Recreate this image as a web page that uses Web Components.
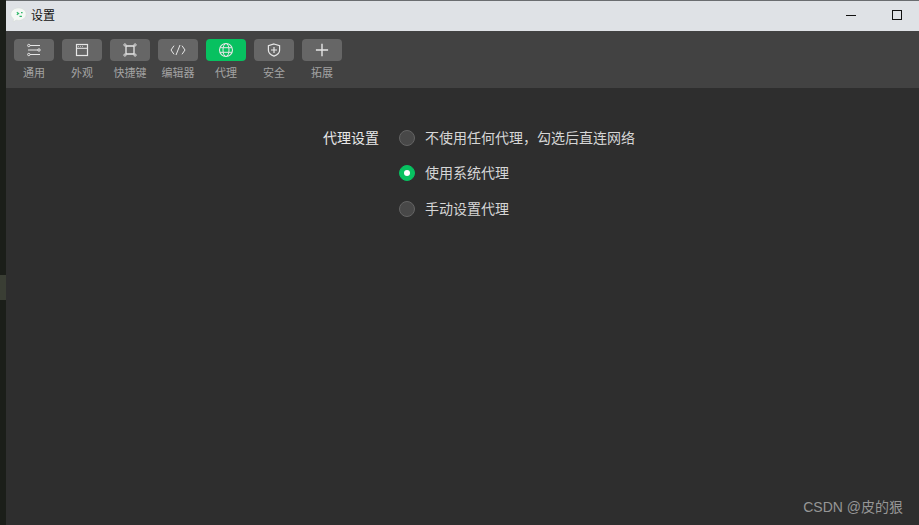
<!DOCTYPE html>
<html lang="zh">
<head>
<meta charset="utf-8">
<title>设置</title>
<style>
html, body { margin: 0; height: 100%; }
body { font-family: "Noto Sans CJK SC", "Liberation Sans", sans-serif; background: #2e2e2e; overflow: hidden; }
</style>
</head>
<body>
<settings-window>
  <title-bar slot="title">设置</title-bar>
  <tool-bar slot="tools">
    <tool-item icon="general">通用</tool-item>
    <tool-item icon="look">外观</tool-item>
    <tool-item icon="keys">快捷键</tool-item>
    <tool-item icon="code">编辑器</tool-item>
    <tool-item icon="globe" active>代理</tool-item>
    <tool-item icon="shield">安全</tool-item>
    <tool-item icon="plus">拓展</tool-item>
  </tool-bar>
  <proxy-form label="代理设置">
    <radio-row>不使用任何代理，勾选后直连网络</radio-row>
    <radio-row checked>使用系统代理</radio-row>
    <radio-row>手动设置代理</radio-row>
  </proxy-form>
</settings-window>

<script>
const icons = {
  general: `<path d="M6 5.500h10M4 10h10M6 14.500h10" stroke-width="1.100"/><circle cx="4.800" cy="5.500" r="1.200"/><circle cx="15" cy="10" r="1.200"/><circle cx="4.800" cy="14.500" r="1.200"/>`,
  look: `<rect x="4.500" y="4.500" width="11" height="11" stroke-width="1.200"/><path d="M4.500 8.300h11" stroke-width="1.100"/><path d="M6 6.400h.9M8 6.400h.9M10 6.400h.9" stroke-width=".8"/>`,
  keys: `<path d="M5.900 6h8.200M5.900 14h8.200M6 5.900v8.200M14 5.900v8.200" stroke-width="1.300"/><circle cx="4.900" cy="4.900" r="1.100" stroke-width=".9"/><circle cx="15.100" cy="4.900" r="1.100" stroke-width=".9"/><circle cx="4.900" cy="15.100" r="1.100" stroke-width=".9"/><circle cx="15.100" cy="15.100" r="1.100" stroke-width=".9"/>`,
  code: `<path d="M6 5.700 3 10l3 4.300M14 5.700l3 4.300-3 4.300M12 5l-4 10" stroke-width="1"/>`,
  globe: `<circle cx="10" cy="10" r="6.500" stroke-width="1.100"/><ellipse cx="10" cy="10" rx="3" ry="6.500" stroke-width="1"/><path d="M4.100 7.700h11.800M4.100 12.300h11.800" stroke-width="1"/>`,
  shield: `<path d="M10 4 15.600 5.800v4.400c0 3-2.500 4.800-5.600 5.900-3.100-1.100-5.600-2.900-5.600-5.900V5.800Z" stroke-width="1.200"/><path d="M10 7v6M7 10h6" stroke-width="1.200"/>`,
  plus: `<path d="M10 3.700v12.600M3.900 10h12.200" stroke-width="1.400"/>`
};

class SettingsWindow extends HTMLElement {
  constructor() {
    super();
    this.attachShadow({mode: 'open'}).innerHTML = `<style>
      :host { display: grid; grid-template-columns: 6px 1fr; height: 525px; background: #2e2e2e; }
      .edge { box-sizing: border-box; padding-top: 275px; background: #1b1e19; }
      .grip { height: 25px; background: #3a3e34; }
      .main { display: flex; flex-direction: column; min-width: 0; border-top: 1px solid #6a6d70; }
    </style>
    <div class="edge"><div class="grip"></div></div>
    <div class="main">
      <slot name="title"></slot>
      <slot name="tools"></slot>
      <slot></slot>
    </div>`;
  }
}

class TitleBar extends HTMLElement {
  constructor() {
    super();
    this.attachShadow({mode: 'open'}).innerHTML = `<style>
      :host { display: flex; align-items: center; height: 30px; padding-left: 4px; background: #dfe2e6; color: #111; font-size: 12px; }
      svg { width: 17px; height: 16px; margin: 0 4px 2px 0; flex: none; }
      .text { flex: 1; line-height: 30px; margin-bottom: 2px; }
      .btn { display: flex; justify-content: center; align-items: center; width: 46px; height: 28px; margin-bottom: 2px; }
      .last { margin-right: -1px; }
      .min { width: 10px; height: 1px; background: #111; }
      .max { width: 8px; height: 8px; border: 1px solid #111; }
    </style>
    <svg viewBox="0 0 17 16"><path d="M8.500 1C4.200 1 .8 3.700.8 7.100c0 2 1.100 3.700 2.800 4.800L3.100 15l3.100-1.900c.7.200 1.500.3 2.300.3 4.300 0 7.700-2.800 7.700-6.300S12.800 1 8.500 1Z" fill="#f5f8f5" stroke="#d5dbd6" stroke-width=".5"/><path d="M6.800 5.300l1.800 1.200-1.800 1.200M11 5.600h1.600M9.500 9.400h2.400" stroke="#2fb86a" stroke-width="1.100" fill="none"/></svg>
    <span class="text"><slot></slot></span>
    <span class="btn"><span class="min"></span></span>
    <span class="btn last"><span class="max"></span></span>`;
  }
}

class ToolBar extends HTMLElement {
  constructor() {
    super();
    this.attachShadow({mode: 'open'}).innerHTML = `<style>
      :host { display: flex; gap: 8px; height: 57px; box-sizing: border-box; padding: 8px 0 0 8px; background: #424242; }
    </style><slot></slot>`;
  }
}

class ToolItem extends HTMLElement {
  connectedCallback() {
    const root = this.attachShadow({mode: 'open'});
    root.innerHTML = `<style>
      :host { display: flex; flex-direction: column; align-items: center; width: 40px; color: #a3a3a3; font-size: 11px; }
      .box { display: flex; justify-content: center; align-items: center; width: 40px; height: 22px; border-radius: 4px; background: #666; }
      :host([active]) .box { background: #07c160; }
      svg { width: 20px; height: 20px; fill: none; stroke: #e6e6e6; }
      .label { margin-top: 3px; line-height: 16px; white-space: nowrap; }
    </style>
    <div class="box"><svg viewBox="0 0 20 20">${icons[this.getAttribute('icon')]}</svg></div>
    <div class="label"><slot></slot></div>`;
  }
}

class ProxyForm extends HTMLElement {
  connectedCallback() {
    const root = this.attachShadow({mode: 'open'});
    root.innerHTML = `<style>
      :host { display: grid; flex: 1; grid-template-columns: 373px 1fr; column-gap: 20px; align-content: start; padding-top: 32px; position: relative; }
      .label { justify-self: end; color: #e8e8e8; font-size: 14px; line-height: 34px; height: 36px; }
      .rows { display: flex; flex-direction: column; }
      .mark { position: absolute; right: 16px; bottom: 8px; color: #969696; font: 14px/20px "Liberation Sans", "Noto Sans CJK SC", sans-serif; }
    </style>
    <div class="label"></div>
    <div class="rows"><slot></slot></div>
    <div class="mark">CSDN @皮的狠</div>`;
    root.querySelector('.label').textContent = this.getAttribute('label');
  }
}

class RadioRow extends HTMLElement {
  constructor() {
    super();
    this.attachShadow({mode: 'open'}).innerHTML = `<style>
      :host { display: flex; align-items: center; gap: 10px; height: 35.5px; color: #d6d6d6; font-size: 14px; }
      .dot { display: flex; justify-content: center; align-items: center; box-sizing: border-box; width: 16px; height: 16px; border-radius: 50%; background: #484848; border: 1px solid #646464; flex: none; }
      .text { margin-bottom: 2px; }
      :host([checked]) .dot { background: #07c160; border-color: #07c160; }
      :host([checked]) .dot::after { content: ""; width: 6px; height: 6px; border-radius: 50%; background: #fff; }
    </style>
    <span class="dot"></span><span class="text"><slot></slot></span>`;
  }
}

customElements.define('settings-window', SettingsWindow);
customElements.define('title-bar', TitleBar);
customElements.define('tool-bar', ToolBar);
customElements.define('tool-item', ToolItem);
customElements.define('proxy-form', ProxyForm);
customElements.define('radio-row', RadioRow);
</script>
</body>
</html>
